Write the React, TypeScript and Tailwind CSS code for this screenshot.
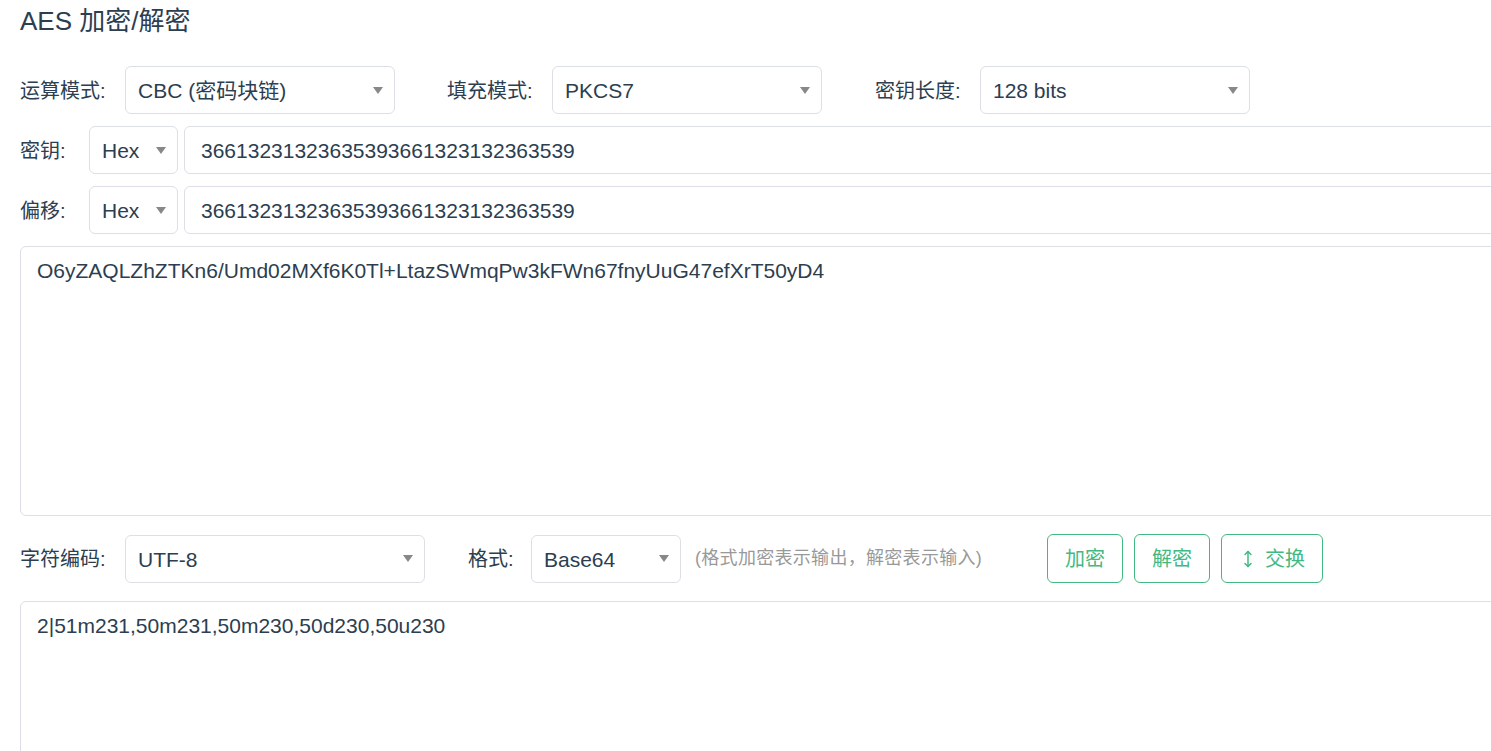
import { MoveVertical } from "lucide-react";

const font = "font-['Liberation_Sans','Noto_Sans_CJK_SC',sans-serif]";
const keyHex = "36613231323635393661323132363539";

function Select({ value, width }: { value: string; width: string }) {
  return (
    <div
      className={`${width} flex h-[48px] shrink-0 items-center justify-between rounded-[6px] border border-[#dcdfe6] bg-white pt-[2px] pl-[12px] pr-[11px] text-[21px] text-[#2c3e50]`}
    >
      <span>{value}</span>
      <span className="-mt-[2px] h-0 w-0 border-x-[5px] border-t-[7px] border-x-transparent border-t-[#888]" />
    </div>
  );
}

function Label({ text, width }: { text: string; width: string }) {
  return <span className={`${width} shrink-0 pt-[1px] text-[20px] text-[#2c3e50]`}>{text}</span>;
}

function Button({ children }: { children: React.ReactNode }) {
  return (
    <button className="flex h-[49px] items-center gap-[8px] rounded-[6px] border border-[#42b983] bg-white px-[17px] text-[20px] text-[#42b983]">
      {children}
    </button>
  );
}

export default function App() {
  return (
    <div className={`${font} h-[751px] w-[1491px] overflow-hidden bg-white`}>
      <div className="w-[1700px] pl-[20px]">
        <h1 className="mt-[8px] text-[26px] leading-none font-normal text-[#2c3e50]">AES 加密/解密</h1>

        <div className="mt-[32px] flex items-center">
          <Label text="运算模式:" width="w-[105px]" />
          <Select value="CBC (密码块链)" width="w-[270px]" />
          <span className="ml-[52px]" />
          <Label text="填充模式:" width="w-[105px]" />
          <Select value="PKCS7" width="w-[270px]" />
          <span className="ml-[53px]" />
          <Label text="密钥长度:" width="w-[105px]" />
          <Select value="128 bits" width="w-[270px]" />
        </div>

        <div className="mt-[12px] flex items-center">
          <Label text="密钥:" width="w-[69px]" />
          <Select value="Hex" width="w-[89px]" />
          <div className="ml-[6px] flex h-[48px] flex-1 items-center rounded-[6px] border border-[#dcdfe6] px-[16px] pt-[2px] text-[21px] text-[#2c3e50]">
            {keyHex}
          </div>
        </div>

        <div className="mt-[12px] flex items-center">
          <Label text="偏移:" width="w-[69px]" />
          <Select value="Hex" width="w-[89px]" />
          <div className="ml-[6px] flex h-[48px] flex-1 items-center rounded-[6px] border border-[#dcdfe6] px-[16px] pt-[2px] text-[21px] text-[#2c3e50]">
            {keyHex}
          </div>
        </div>

        <textarea
          readOnly
          className="mt-[12px] block h-[270px] w-full resize-none rounded-[6px] border border-[#dcdfe6] px-[16px] pt-[8px] text-[21px] leading-[1.5] text-[#2c3e50] outline-none"
          value="O6yZAQLZhZTKn6/Umd02MXf6K0Tl+LtazSWmqPw3kFWn67fnyUuG47efXrT50yD4"
        />

        <div className="mt-[18px] flex items-center">
          <Label text="字符编码:" width="w-[105px]" />
          <Select value="UTF-8" width="w-[300px]" />
          <span className="ml-[43px]" />
          <Label text="格式:" width="w-[63px]" />
          <Select value="Base64" width="w-[150px]" />
          <span className="ml-[14px] text-[18px] tracking-[0.3px] text-[#999]">(格式加密表示输出，解密表示输入)</span>
          <div className="ml-[65px] flex gap-[11px]">
            <Button>加密</Button>
            <Button>解密</Button>
            <Button>
              <MoveVertical size={18} strokeWidth={2} />
              交换
            </Button>
          </div>
        </div>

        <textarea
          readOnly
          className="mt-[18px] block h-[270px] w-full resize-none rounded-[6px] border border-[#dcdfe6] px-[16px] pt-[8px] text-[21px] leading-[1.5] text-[#2c3e50] outline-none"
          value="2|51m231,50m231,50m230,50d230,50u230"
        />
      </div>
    </div>
  );
}
